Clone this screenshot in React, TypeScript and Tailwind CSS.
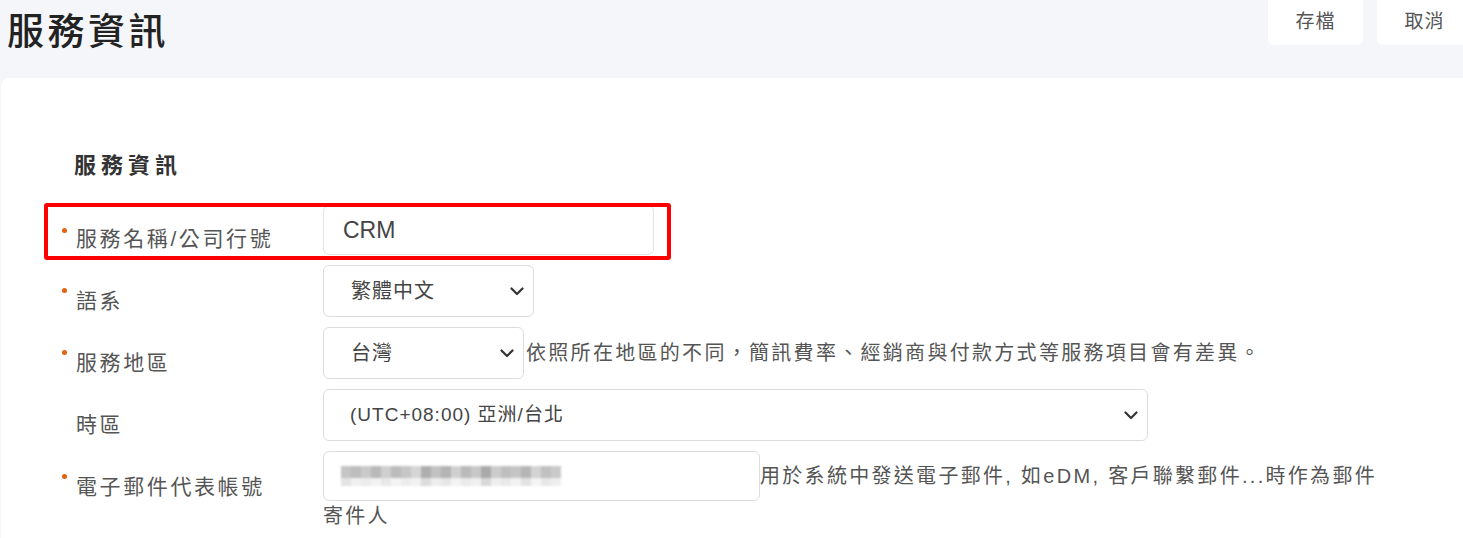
import React from 'react';

const FONT = "font-['Liberation_Sans','Noto_Sans_CJK_TC',sans-serif]";

const Chevron: React.FC = () => (
  <svg width="14" height="9" viewBox="0 0 14 9" fill="none" className="shrink-0">
    <path d="M1.5 1.5 L7 7 L12.5 1.5" stroke="#333" strokeWidth="2.2" strokeLinecap="round" strokeLinejoin="round" />
  </svg>
);

const Label: React.FC<{ text: string; required?: boolean; top?: string }> = ({ text, required, top = 'pt-[21px]' }) => (
  <div className={`relative w-[263px] shrink-0 pl-[16px] ${top}`}>
    {required && <span className="absolute left-[2px] top-[23px] h-[5px] w-[5px] rounded-full bg-[#e2620e]" />}
    <span className="text-[21px] leading-[30px] tracking-[2.6px] text-[#555]">{text}</span>
  </div>
);

const Select: React.FC<{ value: string; width: string; padX?: string; size?: string }> = ({ value, width, padX = 'pl-[27px]', size = 'text-[20px]' }) => (
  <div className={`flex h-[52px] items-center justify-between rounded-[6px] border border-[#dcdcdc] bg-white ${padX} pr-[9px] ${width}`}>
    <span className={`${size} tracking-[1px] text-[#444]`}>{value}</span>
    <Chevron />
  </div>
);

// pixelated blur standing in for the hidden email address
const topRow = ['#c4c4c4', '#bdbdbd', '#c9c9c9', '#b8b8b8', '#cfcfcf', '#bcbcbc', '#c6c6c6', '#d6d6d6', '#aeaeae', '#c2c2c2', '#b4b4b4', '#d0d0d0', '#bababa', '#c8c8c8', '#a9a9a9', '#cccccc', '#bfbfbf', '#c5c5c5', '#b6b6b6', '#d3d3d3', '#c0c0c0', '#cacaca'];
const bottomRow = ['#e4e4e4', '#f0f0f0', '#ececec', '#f2f2f2', '#e8e8e8', '#f4f4f4', '#ededed', '#f1f1f1', '#dcdcdc', '#eeeeee', '#e6e6e6', '#f3f3f3', '#eaeaea', '#f0f0f0', '#d8d8d8', '#efefef', '#e9e9e9', '#f2f2f2', '#e2e2e2', '#f4f4f4', '#e7e7e7', '#efefef'];

const App: React.FC = () => {
  return (
    <div className={`h-[538px] w-full overflow-hidden bg-[#f5f6fa] ${FONT}`}>
      {/* Header */}
      <div className="flex h-[78px] items-start justify-between">
        <h1 className="pl-[7px] pt-[11px] text-[37px] font-medium leading-[44px] tracking-[3.5px] text-[#222]">服務資訊</h1>
        <div className="mr-[-9px] flex gap-[14px]">
          <button className="h-[45px] w-[95px] rounded-b-[6px] bg-white text-[19px] tracking-[1px] text-[#555]">存檔</button>
          <button className="h-[45px] w-[95px] rounded-b-[6px] bg-white text-[19px] tracking-[1px] text-[#555]">取消</button>
        </div>
      </div>

      {/* Card */}
      <div className="ml-[1px] h-[460px] rounded-tl-[8px] bg-white pl-[59px] pt-[72px]">
        <h2 className="pl-[14px] text-[22px] font-bold leading-[32px] tracking-[5px] text-[#333]">服務資訊</h2>

        <div className="mt-[23px] flex flex-col gap-[10px]">
          {/* Service name */}
          <div className="relative flex">
            <div className="pointer-events-none absolute left-[-16px] top-[-2px] h-[57px] w-[627px] rounded-[3px] border-4 border-[#ff0000]" />
            <Label text="服務名稱/公司行號" required top="pt-[19px]" />
            <div className="flex h-[50px] w-[331px] items-center rounded-[6px] border border-[#e2e2e2] pl-[19px]">
              <span className="text-[23px] text-[#444]">CRM</span>
            </div>
          </div>

          {/* Language */}
          <div className="flex">
            <Label text="語系" required />
            <Select value="繁體中文" width="w-[211px]" />
          </div>

          {/* Region */}
          <div className="flex">
            <Label text="服務地區" required />
            <div className="flex items-center">
              <Select value="台灣" width="w-[201px]" />
              <span className="pl-[2px] text-[20px] tracking-[2.3px] text-[#555]">依照所在地區的不同，簡訊費率、經銷商與付款方式等服務項目會有差異。</span>
            </div>
          </div>

          {/* Timezone */}
          <div className="flex">
            <Label text="時區" />
            <Select value="(UTC+08:00) 亞洲/台北" width="w-[825px]" padX="pl-[26px]" size="text-[19px]" />
          </div>

          {/* Email */}
          <div className="flex">
            <Label text="電子郵件代表帳號" required />
            <div className="w-[1062px] text-[20px] leading-[26px] tracking-[2.3px] text-[#555]">
              <span className="inline-flex h-[50px] w-[437px] items-center overflow-hidden rounded-[6px] border border-[#dcdcdc] pl-[17px] align-middle">
                <span className="flex flex-col blur-[1px]">
                  <span className="flex h-[12px]">
                    {topRow.map((c, i) => (
                      <span key={i} className="h-full w-[10px]" style={{ backgroundColor: c }} />
                    ))}
                  </span>
                  <span className="flex h-[8px]">
                    {bottomRow.map((c, i) => (
                      <span key={i} className="h-full w-[10px]" style={{ backgroundColor: c }} />
                    ))}
                  </span>
                </span>
              </span>
              <span className="align-middle">用於系統中發送電子郵件, 如eDM, 客戶聯繫郵件...時作為郵件寄件人</span>
            </div>
          </div>
        </div>
      </div>
    </div>
  );
};

export default App;
